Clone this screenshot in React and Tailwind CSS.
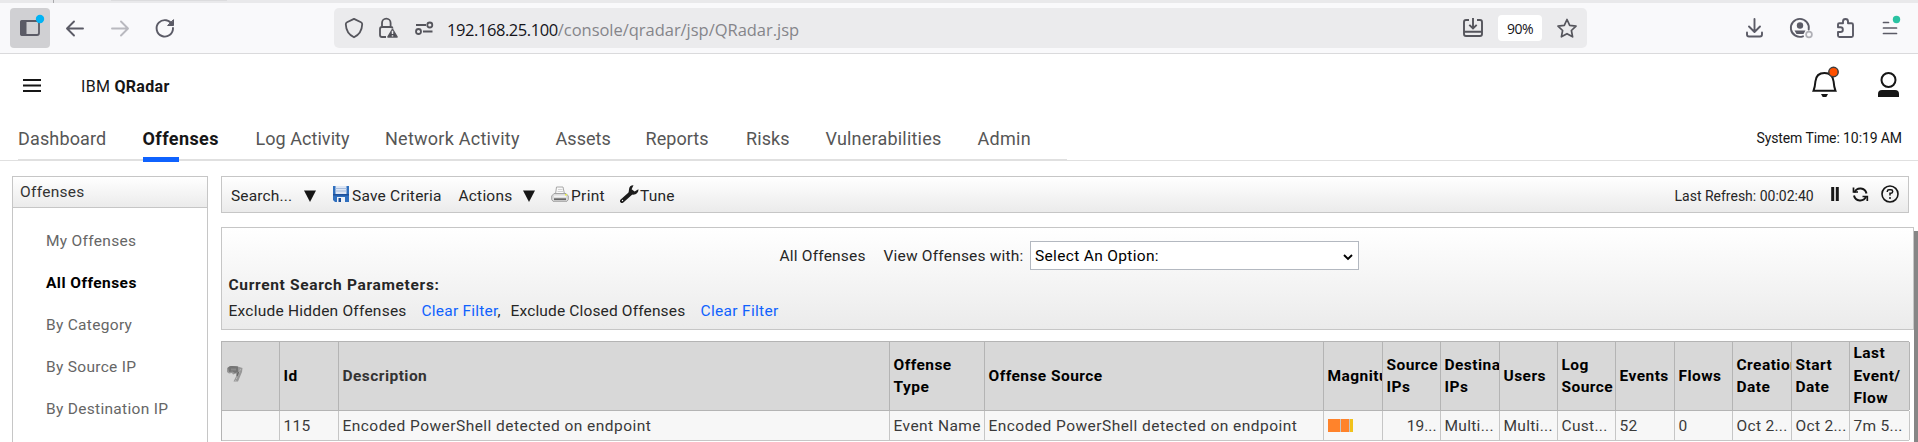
import React from "react";

const TABS = [
  ["Dashboard", "w-[124.5px] tracking-[0.15px]"],
  ["Offenses", "w-[113px] font-bold text-[#161616] tracking-[0.4px]"],
  ["Log Activity", "w-[129.5px] tracking-[0.05px]"],
  ["Network Activity", "w-[170.5px] tracking-[0.25px]"],
  ["Assets", "w-[90px] tracking-[0.05px]"],
  ["Reports", "w-[100.5px] tracking-[0.05px]"],
  ["Risks", "w-[79.5px] tracking-[0.1px]"],
  ["Vulnerabilities", "w-[152px] tracking-[0.2px]"],
  ["Admin", "w-[89px] tracking-[0.3px]"],
];

const SIDE = ["My Offenses", "All Offenses", "By Category", "By Source IP", "By Destination IP"];

const COLS = [
  [<FlagIcon />, "", "pl-[5px]"],
  ["Id", "115"],
  ["Description", "Encoded PowerShell detected on endpoint", "text-[#333]", "tracking-[0.46px]"],
  [<>Offense<br />Type</>, "Event Name", "", "tracking-[0.45px]"],
  ["Offense Source", "Encoded PowerShell detected on endpoint", "", "tracking-[0.46px]"],
  ["Magnitude", <Magnitude />],
  [<>Source<br />IPs</>, "19...", "", "text-right"],
  [<>Destination<br />IPs</>, "Multi..."],
  ["Users", "Multi..."],
  [<>Log<br />Source</>, "Cust..."],
  ["Events", "52"],
  ["Flows", "0"],
  [<>Creation<br />Date</>, "Oct 2..."],
  [<>Start<br />Date</>, "Oct 2..."],
  [<>Last<br />Event/<br />Flow</>, "7m 5..."],
];

const GRID =
  "grid grid-cols-[58px_59px_551px_95px_339px_59px_58px_59px_58px_58px_59px_58px_59px_58px_60px]";

function FlagIcon() {
  return (
    <svg width="16" height="17" viewBox="0 0 16 17" className="-mt-[5px] shrink-0">
      <path d="M0 3 L3 1 L9 1 L15.500 3 L15 7 L11 16.500 L6.500 16.500 L9.500 10.500 L9 8.500 L6 9.500 L5 8 L2 8.500 L0 7Z" fill="#989898" />
      <path d="M1 2.800 C4 0 7 1.500 11 1.500 L11 7 L8 8 L5.500 6.500 L2 7Z" fill="#757575" />
      <path d="M4 3.500 L9 3.500 L9 5.500 L4 5.500Z" fill="#8a8a8a" />
      <path d="M13.500 4 L8.500 16" stroke="#bdbdbd" strokeWidth="1" strokeDasharray="2 1" />
      <path d="M11.500 7 L10 11" stroke="#686868" strokeWidth="1.400" />
    </svg>
  );
}

function Magnitude() {
  return (
    <span className="mt-[8px] flex h-[13px] w-[25px] gap-px bg-[#c6c6c6]">
      <span className="w-[12px] bg-[#ff832b]" />
      <span className="w-[8px] bg-[#ff832b]" />
      <span className="w-[3px] bg-[#f1c21b]" />
    </span>
  );
}

function BrowserBar() {
  return (
    <div className="h-[54px] border-b border-[#dadadc] bg-[#f9f9fb]">
      <div className="flex h-[3px] bg-[#e9e9eb]">
        <div className="ml-[53px] w-px bg-[#aaaaad]" />
        <div className="ml-[57px] h-px w-[116px] bg-[#dcdcde]" />
      </div>
      <div className="flex pt-[5px] text-[#5b5b66]">
        <div className="ml-[10px] flex h-10 w-10 items-center justify-center rounded-[4px] bg-[#d0d0d3]">
          <svg width="40" height="40" viewBox="0 0 40 40" fill="none">
            <rect x="11" y="13" width="18" height="14" rx="2" stroke="#5b5b66" strokeWidth="1.800" />
            <path d="M12 12 H16.500 V28 H12 Q10 28 10 26 V14 Q10 12 12 12Z" fill="#5b5b66" />
            <circle cx="30" cy="11" r="4.200" fill="#00b3f4" />
          </svg>
        </div>
        <svg width="284" height="40" viewBox="50 8 284 40" fill="none" strokeWidth="1.900" strokeLinecap="round" strokeLinejoin="round">
          <path d="M83 28.500H67.500M74 21.500L67 28.500L74 35.500" stroke="#5b5b66" />
          <path d="M112 28.500H127.500M121 21.500L128 28.500L121 35.500" stroke="#b9b9bf" />
          <path d="M172.300 25 A8.200 8.200 0 1 0 173 28" stroke="#5b5b66" />
          <path d="M173.500 20V25.500H168Z" fill="#5b5b66" strokeWidth="1" stroke="#5b5b66" />
        </svg>
        <div className="flex h-10 w-[1253px] items-center rounded-[5px] bg-[#ebebed]">
          <svg width="109" height="40" viewBox="334 8 109 40" fill="none" stroke="#55555c" strokeWidth="1.800">
            <path d="M354 18.900L361 22.200Q362.300 22.800 362.200 24.200C362 30 359.500 34.500 354 37.300C348.500 34.500 346 30 345.800 24.200Q345.700 22.800 347 22.200Z" strokeLinejoin="round" />
            <path d="M386 37H382Q380 37 380 35V29Q380 27 382 27H391Q392.500 27 392.600 28.500M382 27V23A4.300 4.300 0 0 1 390.600 23V27" />
            <path d="M392.500 29.500L397 37H388Z" fill="#4a4a52" strokeWidth="1.600" strokeLinejoin="round" />
            <path d="M392.500 30.800V34M392.500 35.200V36.600" stroke="#ebebed" strokeWidth="1.500" />
            <path d="M416 25H426M423 31.500H432.500" />
            <circle cx="429.800" cy="25" r="2.500" />
            <circle cx="418.500" cy="31.500" r="2.500" />
          </svg>
          <div className="ml-1 flex pt-[4px] font-['Open_Sans',sans-serif] text-[16.500px] leading-[24px] whitespace-nowrap">
            <span className="tracking-[-0.430px] text-[#15141a]">192.168.25.100</span>
            <span className="tracking-[-0.030px] text-[#85858a]">/console/qradar/jsp/QRadar.jsp</span>
          </div>
          <svg width="35" height="40" viewBox="1458 8 35 40" className="ml-auto" fill="none" stroke="#55555c" strokeWidth="1.900">
            <path d="M1469 20H1466Q1464 20 1464 22V34Q1464 36 1466 36H1480Q1482 36 1482 34V22Q1482 20 1480 20H1477M1464 31.700H1482M1473 18V28M1469.300 24.800L1473 28.500L1476.700 24.800" />
          </svg>
          <div className="ml-[5px] h-[26px] w-11 rounded-[4px] bg-white text-center font-['Open_Sans',sans-serif] text-[14px] leading-[27px] tracking-[-0.500px] text-[#15141a]">90%</div>
          <svg width="45" height="40" viewBox="1542 8 45 40" fill="none" stroke="#55555c" strokeWidth="1.700" strokeLinejoin="round">
            <path d="M1567 19.500L1569.700 25.300L1576 26.100L1571.400 30.500L1572.600 36.800L1567 33.700L1561.400 36.800L1562.600 30.500L1558 26.100L1564.300 25.300Z" />
          </svg>
        </div>
        <svg width="331" height="40" viewBox="1587 8 331 40" fill="none" stroke="#5b5b66" strokeWidth="1.900" strokeLinecap="round" strokeLinejoin="round">
          <path d="M1754.500 19V31.500M1749 26.500L1754.500 32L1760 26.500M1747 32.500V34.500Q1747 36.500 1749 36.500H1760Q1762 36.500 1762 34.500V32.500" />
          <path d="M1803 36.300A9 9 0 1 1 1808.700 29.500" />
          <circle cx="1800" cy="25.500" r="3.200" fill="#5b5b66" stroke="none" />
          <path d="M1794.500 30.500H1805.500L1803.500 34H1796.500Z" fill="#5b5b66" stroke="none" />
          <circle cx="1809" cy="34.500" r="2.900" stroke="#b0b0b6" strokeWidth="1.700" />
          <path d="M1838 27V24.500Q1838 23.300 1839.200 23.300H1843V21.500A2.500 2.500 0 0 1 1848 21.500V23.300H1851.500Q1853 23.300 1853 24.800V35.500Q1853 37 1851.500 37H1839.500Q1838 37 1838 35.500V32H1840.500A2.300 2.300 0 0 0 1840.500 27.300H1838" />
          <path d="M1883.500 22.500H1888.500M1883.500 28H1896.500M1883.500 33.500H1896.500" strokeWidth="1.700" />
          <circle cx="1896.500" cy="19.500" r="3.700" fill="#2ac3a2" stroke="none" />
        </svg>
      </div>
    </div>
  );
}

function AppHeader() {
  return (
    <header className="flex h-[59px] items-start">
      <svg width="18" height="13" viewBox="0 0 18 13" className="mt-[25px] ml-[23px]">
        <path d="M0 1H18M0 6.500H18M0 12H18" stroke="#161616" strokeWidth="2" />
      </svg>
      <div className="mt-[22px] ml-10 text-[16px] leading-[22px] tracking-[0.300px] text-[#161616]">
        IBM <b>QRadar</b>
      </div>
      <svg width="100" height="40" viewBox="1808 64 100 40" className="mt-[10px] mr-[10px] ml-auto" fill="none">
        <path d="M1813.500 90.800H1835.500C1834.200 87.500 1833.900 85.500 1833.600 81.500C1833.100 76 1829.700 73 1824.500 73S1815.900 76 1815.400 81.500C1815.100 85.500 1814.800 87.500 1813.500 90.800Z" stroke="#161616" strokeWidth="2" />
        <path d="M1821 94H1828L1826.300 97H1822.700Z" fill="#161616" />
        <circle cx="1833.500" cy="72" r="4.700" fill="#ff5000" stroke="#3d3d3d" strokeWidth="1.500" />
        <circle cx="1888.500" cy="80" r="7" stroke="#161616" strokeWidth="2" />
        <path d="M1878 97V94Q1878 90 1882 90H1895Q1899 90 1899 94V97Z" fill="#161616" />
      </svg>
    </header>
  );
}

function Tabs() {
  return (
    <div className="flex h-[48px] items-end shadow-[inset_0_-1px_0_#e0e0e0]">
      <nav className="ml-[18px] flex h-full w-[1048.500px] border-b-2 border-[#e0e0e0] text-[18px] text-[#565656]">
        {TABS.map(([name, cls]) => (
          <div key={name} className={"relative shrink-0 pt-[13px] leading-[26px] whitespace-nowrap " + cls}>
            {name}
            {name === "Offenses" && <span className="absolute top-[44px] left-[0.500px] h-[5px] w-9 bg-[#0f62fe]" />}
          </div>
        ))}
      </nav>
      <div className="mr-[16px] mb-[13px] ml-auto text-[14px] leading-5 tracking-[-0.100px] text-[#161616]">System Time: 10:19 AM</div>
    </div>
  );
}

function Arrow({ className }) {
  return (
    <svg width="12" height="12" viewBox="0 0 12 12" className={className}>
      <path d="M0 0.500H12L6 12Z" fill="#161616" />
    </svg>
  );
}

function Toolbar() {
  return (
    <div className="flex h-[37px] w-[1688px] items-start border border-[#c6c6c6] bg-linear-to-b from-white to-[#ebebeb] pl-[9px] text-[15.500px] leading-[22px] whitespace-nowrap text-[#262626]">
      <span className="mt-2 w-[73px] tracking-[0.150px]">Search...</span>
      <Arrow className="mt-[13px]" />
      <svg width="16" height="16" viewBox="0 0 16 16" className="mt-[9px] ml-[17px]">
        <path d="M0 0H16V16H2L0 14Z" fill="#2f6fbe" />
        <path d="M2.500 0H13.500V8H2.500Z" fill="#dde6f4" />
        <path d="M2.500 2.500H13.500M2.500 5H13.500" stroke="#a7bcdd" strokeWidth="1" />
        <path d="M0 8H16V9.500H0Z" fill="#1d4f99" />
        <path d="M4 11H12V16H4Z" fill="#eef2f8" />
        <path d="M5.500 12H8V16H5.500Z" fill="#1d4f99" />
      </svg>
      <span className="mt-2 ml-[3px] w-[106.500px] tracking-[0.220px]">Save Criteria</span>
      <span className="mt-2 w-[64.500px] tracking-[0.200px]">Actions</span>
      <Arrow className="mt-[13px]" />
      <svg width="18" height="16" viewBox="0 0 18 16" className="mt-[9px] ml-[16px]">
        <path d="M4.500 8L5.500 1H12L13.500 8Z" fill="#fafafa" stroke="#a8a8a8" />
        <path d="M7 3.500H11.500M6.500 5.500H12" stroke="#c9c9c9" strokeWidth="0.800" />
        <path d="M3 7.500H15L17.300 10V13.500L16 15.300H2L0.700 13.500V10Z" fill="#dcdcdc" stroke="#a3a3a3" />
        <path d="M3 10.200H15" stroke="#fff" />
        <path d="M3 13.200H15" stroke="#666" strokeWidth="1.800" />
        <path d="M14 8.800H16" stroke="#e1e84a" strokeWidth="1.500" />
      </svg>
      <span className="mt-2 ml-[2px] w-[49px] tracking-[0.300px]">Print</span>
      <svg width="19" height="18" viewBox="0 0 19 18" className="mt-2">
        <path d="M2 16L11 8" stroke="#1c1c1c" strokeWidth="4" strokeLinecap="round" />
        <path d="M13.500 0.300L11.600 4.200L14.600 6.600L18.400 4.200C18.700 7.500 16 10 12.500 9.600L9.800 9.900L8.600 7.600L9 4.500C9 1.800 11 0.200 13.500 0.300Z" fill="#1c1c1c" />
        <circle cx="2.500" cy="15.500" r="0.700" fill="#fff" />
      </svg>
      <span className="mt-2 ml-px tracking-[0.200px]">Tune</span>
      <span className="mt-[8px] ml-auto w-[155.500px] text-[14px]">Last Refresh: 00:02:40</span>
      <svg width="78" height="20" viewBox="1830 184 78 20" className="mt-[7px]" fill="none" stroke="#161616">
        <path d="M1832.700 187V201M1837.300 187V201" strokeWidth="3" />
        <path d="M1854.500 192.500A6.300 6.300 0 0 1 1866.500 193.500M1866 196.500A6.300 6.300 0 0 1 1854 195.500" strokeWidth="2" />
        <path d="M1853.500 187.500V192H1858M1867.300 201V196.500H1862.500" strokeWidth="1.700" />
        <circle cx="1890" cy="194" r="8" strokeWidth="1.600" />
        <path d="M1887.300 192V191.500Q1887.300 189.800 1889 189.800H1891Q1892.700 189.800 1892.700 191.500T1891 193.200H1890V195.500" strokeWidth="1.500" />
        <circle cx="1890" cy="198" r="1" fill="#161616" stroke="none" />
      </svg>
    </div>
  );
}

function SearchPanel() {
  return (
    <div className="mt-[14px] flex">
      <div className="h-[103px] w-[1693px] border border-[#c6c6c6] bg-linear-to-b from-white to-[#ebebeb] pl-[7px] text-[15.500px] leading-[22px] whitespace-nowrap text-[#262626]">
        <div className="mt-[13px] ml-[550.500px] flex h-[29px]">
          <span className="mt-[4px] w-[104px] tracking-[0.200px]">All Offenses</span>
          <span className="mt-[4px] w-[146.500px] tracking-[0.200px]">View Offenses with:</span>
          <div className="flex w-[329px] justify-between border border-[#b3b8c0] bg-white pt-[3px] pr-[5px] pl-[4px] text-black">
            <span className="tracking-[0.330px]">Select An Option:</span>
            <svg width="10" height="7" viewBox="0 0 10 7" className="mt-[9px]" fill="none">
              <path d="M1 1L5 5L9 1" stroke="#000" strokeWidth="1.900" />
            </svg>
          </div>
        </div>
        <div className="mt-[4px] -ml-[0.500px] font-bold tracking-[0.660px]">Current Search Parameters:</div>
        <div className="mt-[4px] -ml-[0.500px] flex">
          <span className="w-[193px] tracking-[0.230px]">Exclude Hidden Offenses</span>
          <span className="w-[89px] tracking-[0.220px]"><span className="text-[#0f62fe]">Clear Filter</span>,</span>
          <span className="w-[190px] tracking-[0.150px]">Exclude Closed Offenses</span>
          <span className="tracking-[0.320px] text-[#0f62fe]">Clear Filter</span>
        </div>
      </div>
    </div>
  );
}

function OffenseTable() {
  return (
    <div className="mt-[11px] w-[1688px] border-t border-l border-[#b4b4b4] text-[15.500px]">
      <div className={GRID + " h-[69px] border-b border-[#b4b4b4] bg-[#d8d8d8] font-bold text-black"}>
        {COLS.map(([head, , cls], i) => (
          <div key={i} className={"flex items-center overflow-hidden border-r border-[#b4b4b4] leading-[22.500px] tracking-[0.450px] whitespace-nowrap " + (cls || "") + (i === 0 ? "" : " pl-[3.500px]")}>
            <div>{head}</div>
          </div>
        ))}
      </div>
      <div className={GRID + " h-[30px] border-b border-[#c6c6c6] bg-[#f7f7f7] text-[#3a3a3a]"}>
        {COLS.map(([, cell, , cls], i) => (
          <div key={i} className={"overflow-hidden border-r border-[#c6c6c6] px-[3.500px] leading-[30px] whitespace-nowrap " + (cls || "tracking-[0.300px]")}>{cell}</div>
        ))}
      </div>
    </div>
  );
}

function Sidebar() {
  return (
    <aside className="h-[266px] w-[196px] shrink-0 border border-b-0 border-[#c6c6c6] bg-white text-[15.500px]">
      <div className="h-[31px] border-b border-[#c6c6c6] bg-linear-to-b from-white to-[#ebebeb] pt-[4px] pl-[7px] leading-[22px] tracking-[0.300px] text-[#333]">Offenses</div>
      <ul className="pt-[12px] pl-[33px] leading-[42px] text-[#666]">
        {SIDE.map((s) => (
          <li key={s} className={s === "All Offenses" ? "font-bold tracking-[0.450px] text-black" : "tracking-[0.300px]"}>{s}</li>
        ))}
      </ul>
    </aside>
  );
}

export default function App() {
  return (
    <div className="h-[442px] w-[1918px] overflow-hidden bg-white font-[Roboto,sans-serif]">
      <BrowserBar />
      <AppHeader />
      <Tabs />
      <div className="flex pt-[15px] pl-3">
        <Sidebar />
        <main className="ml-[13px] h-[266px] w-[1693px] shrink-0 overflow-hidden">
          <Toolbar />
          <SearchPanel />
          <OffenseTable />
        </main>
        <div className="mt-[55px] h-[211px] w-1 shrink-0 bg-[#868686]" />
      </div>
    </div>
  );
}
